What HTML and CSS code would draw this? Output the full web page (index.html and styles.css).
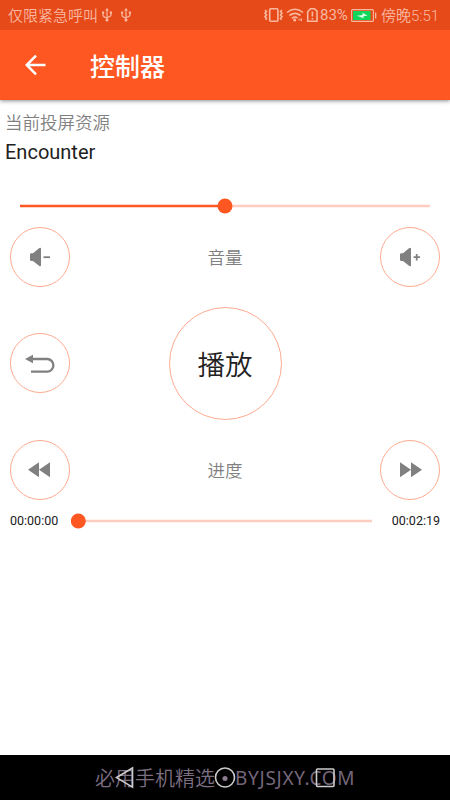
FILE: index.html
```html
<!DOCTYPE html>
<html lang="zh-CN">
<head>
<meta charset="utf-8">
<title>控制器</title>
<link rel="stylesheet" href="styles.css">
</head>
<body>
<div class="screen">
  <div class="status">
    <span class="carrier">仅限紧急呼叫</span>
    <svg class="usb" width="12" height="16" viewBox="0 0 12 16"><path d="M6 2v11M2 6v2q0 2 4 3M10 6v2q0 1.500-4 2.500"/><path class="solid" d="M6 1l2 2.500H4zM1 4.500h2.200v2.200H1zM8.800 4.500H11v2.200H8.800z"/><circle class="solid" cx="6" cy="13" r="1.500"/></svg>
    <svg class="usb second" width="12" height="16" viewBox="0 0 12 16"><path d="M6 2v11M2 6v2q0 2 4 3M10 6v2q0 1.500-4 2.500"/><path class="solid" d="M6 1l2 2.500H4zM1 4.500h2.200v2.200H1zM8.800 4.500H11v2.200H8.800z"/><circle class="solid" cx="6" cy="13" r="1.500"/></svg>
    <svg class="signals" width="54" height="16" viewBox="264 7 54 16">
      <rect x="269.700" y="8.700" width="8.200" height="12.600" rx="1"/>
      <path d="M265 10l1.500 1.500-1.500 1.700 1.500 1.800-1.500 1.700 1.500 1.700-1 1.500M282 10l-1.500 1.500 1.500 1.700-1.500 1.800 1.500 1.700-1.500 1.700 1 1.500"/>
      <path d="M287 12.500q8-6.500 16 0M289.500 15.500q5.500-4.300 11 0M292 18.300q3-2.300 5.500-.3"/>
      <circle class="solid" cx="294.700" cy="20" r="1.500"/><path class="solid" d="M298.500 18.500h1v2h-1zM300.500 18.500h1.500v2.500h-1.500z"/>
      <path d="M310.500 8.700h4l2.500 2.500v10.100h-9.300v-9.600zM312.400 11.500v5M312.400 18v1.500"/>
    </svg>
    <span class="percent">83%</span>
    <svg class="battery" width="26" height="13" viewBox="0 0 26 13"><rect class="shell" x=".6" y=".6" width="21.800" height="11.800" rx="1"/><rect class="charge" x="2" y="2" width="17.500" height="9"/><path class="bolt" d="M6 6.700l5.500-.8V3.700l5 2.800-4 .8v2z"/><path class="tip" d="M24 3.500h1.300v6H24z"/></svg>
    <span class="clock">傍晚5:51</span>
  </div>
  <header class="appbar">
    <svg width="22" height="22" viewBox="0 0 22 22"><path d="M20.500 11H2.500M11 1.700L1.700 11l9.300 9.300"/></svg>
    <h1>控制器</h1>
  </header>
  <main>
    <p class="label">当前投屏资源</p>
    <p class="name">Encounter</p>
    <div class="slider volume"><svg width="410" height="16" viewBox="0 0 410 16"><path class="rest" d="M205 8h205"/><path class="fill" d="M0 8h205"/><circle class="thumb" cx="205" cy="8" r="7.500"/></svg></div>
    <div class="row first">
      <button class="round"><svg width="60" height="60" viewBox="0 0 60 60"><path class="solid" d="M20 27.500Q20 26.300 21.200 26.300H23L29 21.200q2-1.300 2 .5v16.600q0 1.800-2 .5L23 34h-1.800Q20 34 20 32.700z"/><path d="M33.500 30.200h6.500" stroke-width="1.800"/></svg></button>
      <span class="label">音量</span>
      <button class="round"><svg width="60" height="60" viewBox="0 0 60 60"><path class="solid" d="M20 27.500Q20 26.300 21.200 26.300H23L29 21.200q2-1.300 2 .5v16.600q0 1.800-2 .5L23 34h-1.800Q20 34 20 32.700z"/><path d="M33.500 30.200h6.500M36.700 26.900v6.600" stroke-width="1.800"/></svg></button>
    </div>
    <div class="row middle">
      <button class="round"><svg width="60" height="60" viewBox="0 0 60 60"><path class="solid" d="M15 26l8-4.300v8.600z"/><path d="M21 26h16.200a6.200 6.300 0 0 1 0 12.600H21" stroke-width="2.300"/></svg></button>
      <button class="round play">播放</button>
    </div>
    <div class="row">
      <button class="round"><svg width="60" height="60" viewBox="0 0 60 60"><path class="solid" d="M18 29.700l11-7.500v15zM29 29.700L40 22.200v15z"/></svg></button>
      <span class="label">进度</span>
      <button class="round"><svg width="60" height="60" viewBox="0 0 60 60"><path class="solid" d="M20 22.200l11 7.500L20 37.200zM31 22.200l11 7.500L31 37.200z"/></svg></button>
    </div>
    <div class="timeline"><span>00:00:00</span><div class="slider progress"><svg width="301" height="16" viewBox="0 0 301 16"><path class="rest" d="M7 8h294"/><circle class="thumb" cx="7.300" cy="8" r="7.500"/></svg></div><span>00:02:19</span></div>
  </main>
  <nav class="navbar">
    <span class="mark">必用手机精选</span><span class="site">BYJSJXY.COM</span>
    <svg class="keys" width="450" height="45" viewBox="0 0 450 45"><path d="M132.500 13v19.200L116.500 22.600z"/><circle cx="225" cy="22.500" r="9.500"/><rect x="316.500" y="14" width="17.500" height="17.500" rx="1"/><circle class="dot" cx="225" cy="23.500" r="2.500"/></svg>
  </nav>
</div>
</body>
</html>
```
FILE: styles.css
```css
* { box-sizing: border-box; margin: 0; padding: 0; }
body { font-family: Roboto, "Noto Sans CJK SC", sans-serif; background: #fff; color: #212121; }
.screen { width: 450px; height: 800px; display: flex; flex-direction: column; overflow: hidden; }
svg { display: block; flex: none; fill: none; }
span { white-space: nowrap; }

.status { position: relative; z-index: 1; height: 30px; flex: none; display: flex; align-items: center; padding-left: 8px; background: #e64a19; color: #f8b8a2; font-size: 15px; line-height: 32px; }
.carrier { width: 93px; font-weight: 350; padding-top: 2px; }
.status svg { stroke: #f9b8a0; stroke-width: 1.6; }
.status .solid { fill: #f9b8a0; stroke: none; }
.status .usb { stroke-width: 1.2; }
.status .battery { stroke-width: 1.1; }
.second { margin-left: 7px; }
.signals { margin-left: 132px; }
.percent { width: 31px; margin-left: 2px; line-height: 30px; }
.status .battery { margin: 0 4px 0 0; }
.status .charge { fill: #12d65b; stroke: none; }
.status .bolt { fill: #d8ffe0; stroke: none; }
.status .tip { fill: #f9b8a0; stroke: none; }
.clock { font-weight: 350; padding-top: 2px; }

.appbar { height: 70px; flex: none; display: flex; align-items: center; padding-left: 25px; background: #ff5722; color: #fff; box-shadow: 0 1px 4px rgba(0, 0, 0, .45); }
.appbar svg { stroke: #fff; stroke-width: 2.5; }
.appbar h1 { margin-left: 43px; padding-top: 5px; font-size: 25px; font-weight: 500; line-height: 70px; }

main { flex: 1; padding-top: 9px; }
.label { font-size: 17.5px; line-height: 28px; color: #808080; font-weight: 350; }
p.label, .name { padding-left: 5px; }
.name { font-size: 20px; line-height: 28px; margin-top: 1px; }
.row .label { padding-top: 2px; }

.slider { height: 16px; }
.thumb { fill: #ff5722; }
.fill { stroke: #ff5722; stroke-width: 2.5; }
.rest { stroke: #ffcdbf; stroke-width: 2.5; }
.volume { margin: 31.75px 20px 0; }

.row { display: flex; align-items: center; justify-content: space-between; height: 60px; padding: 0 10px; }
.first { margin-top: 13.25px; }
.middle { height: 113px; margin: 20px 0 19.5px; justify-content: flex-start; }
.middle .round:first-child { margin-top: -1px; }
.round { width: 60px; height: 60px; border: 1px solid #ffab91; border-radius: 50%; background: none; display: flex; align-items: center; justify-content: center; flex: none; color: #212121; font-family: inherit; }
.round svg { stroke: #808080; }
.round .solid { fill: #808080; stroke: none; }
.play { width: 113px; height: 113px; margin-left: 98.5px; padding-bottom: 1px; font-size: 27.5px; font-weight: 350; }

.timeline { display: flex; align-items: center; padding: 0 10px; height: 16px; margin-top: 13px; font-size: 12.5px; line-height: 16px; }
.timeline span { width: 49px; text-align: right; }
.timeline span:first-child { text-align: left; }
.progress { width: 301px; margin: 0 19px 0 12px; }

.navbar { position: relative; height: 45px; flex: none; display: flex; background: #000; color: #7d6f82; line-height: 48px; font-size: 20px; padding-left: 95px; font-weight: 350; }
.mark { width: 140px; }
.site { font-family: "Noto Sans", sans-serif; font-size: 19px; font-weight: 400; letter-spacing: .7px; line-height: 46px; color: #75677a; }
.keys { position: absolute; left: 0; top: 0; stroke: #ccc; stroke-width: 1.6; }
.keys .dot { fill: #8b7c90; stroke: none; }
```
